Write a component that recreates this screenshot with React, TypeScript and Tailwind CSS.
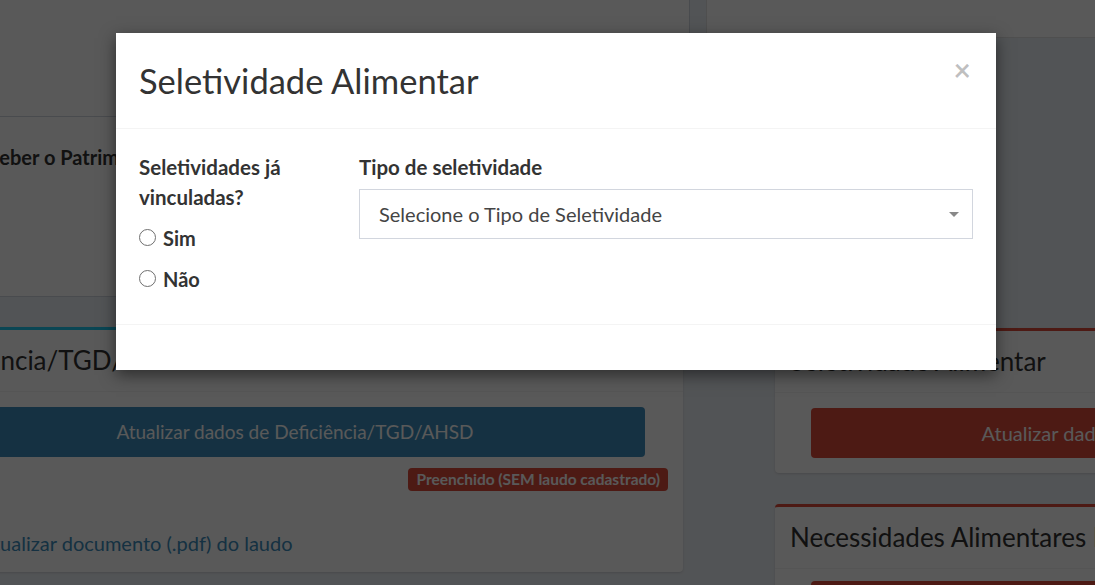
const Radio = ({ label }: { label: string }) => (
  <label className="flex h-[41px] items-center gap-[7px]">
    <span className="h-[17px] w-[17px] rounded-full border border-[#6f6f6f] bg-white" />
    <span className="text-[20px] font-bold text-[#333]">{label}</span>
  </label>
);

const PageBehind = () => (
  <div className="flex">
    <div className="ml-[-95px] w-[785px] shrink-0">
      <div className="h-[297px] border-b border-r border-[#d2d6de] bg-white">
        <div className="h-[117px] border-b border-[#d2d6de]" />
        <div className="pl-[62px] pt-[26px] text-[20px] font-bold leading-[28px] text-[#333]">
          Receber o Patrimônio
        </div>
      </div>
      <div className="mr-[7px] mt-[30px] rounded-sm border-t-[3px] border-[#1ec8ef] bg-white shadow-sm">
        <div className="flex h-[62px] items-center border-b border-[#f4f4f4] px-[15px] text-[26px] text-[#333]">
          Deficiência/TGD/AHSD
        </div>
        <div className="p-[15px]">
          <div className="ml-[25px] mr-[23px] flex h-[50px] items-center justify-center rounded bg-[#3c8dbc] text-[19px] text-white">
            Atualizar dados de Deficiência/TGD/AHSD
          </div>
          <div className="mt-[11px] flex justify-end">
            <span className="flex h-[23px] items-center rounded bg-[#dd4b39] px-[8px] text-[15.5px] font-bold text-white">
              Preenchido (SEM laudo cadastrado)
            </span>
          </div>
          <div className="mt-[38px] pl-[60px] text-[20px] leading-[28px] text-[#3c8dbc]">
            Atualizar documento (.pdf) do laudo
          </div>
        </div>
      </div>
    </div>
    <div className="flex-1">
      <div className="ml-[16px] h-[38px] border-b border-l border-[#e3e3e3] bg-white" />
      <div className="ml-[85px] mt-[290px] w-[800px] rounded-sm border-t-[3px] border-[#dd4b39] bg-white shadow-sm">
        <div className="flex h-[62px] items-center border-b border-[#f4f4f4] px-[15px] text-[26px] text-[#333]">
          Seletividade Alimentar
        </div>
        <div className="py-[15px] pl-[36px]">
          <div className="flex h-[50px] w-[704px] items-center justify-center rounded bg-[#dd4b39] text-[20px] text-white">
            Atualizar dados de Seletividade Alimentar
          </div>
        </div>
      </div>
      <div className="ml-[85px] mt-[31px] w-[800px] rounded-sm border-t-[3px] border-[#dd4b39] bg-white shadow-sm">
        <div className="flex h-[62px] items-center border-b border-[#f4f4f4] px-[15px] text-[26px] text-[#333]">
          Necessidades Alimentares Especiais
        </div>
        <div className="pb-[15px] pl-[36px] pt-[12px]">
          <div className="flex h-[50px] w-[704px] items-center justify-center rounded bg-[#dd4b39] text-[20px] text-white">
            Atualizar dados de Necessidades Alimentares
          </div>
        </div>
      </div>
    </div>
  </div>
);

export default function App() {
  return (
    <div className="relative h-[585px] w-[1095px] overflow-hidden bg-[#ecf0f5] font-['Lato',sans-serif]">
      <PageBehind />
      <div className="absolute inset-0 bg-black/65" />
      <div className="absolute left-[116px] top-[33px] w-[880px] bg-white shadow-[0_5px_15px_rgba(0,0,0,0.5)]">
        <div className="flex h-[96px] items-start justify-between border-b border-[#f4f4f4] px-[23px]">
          <h4 className="self-center pt-[2px] text-[34.5px] leading-none text-[#333]">Seletividade Alimentar</h4>
          <button className="mr-[2px] mt-[21px] text-[30px] font-bold leading-none text-black/25">×</button>
        </div>
        <div className="flex px-[23px] pb-[25px] pt-[23px]">
          <div className="w-[220px] shrink-0">
            <div className="text-[20.5px] font-bold leading-[30px] text-[#333]">
              Seletividades já
              <br />
              vinculadas?
            </div>
            <div className="mt-[5px]">
              <Radio label="Sim" />
              <Radio label="Não" />
            </div>
          </div>
          <div className="flex-1">
            <div className="text-[20.5px] font-bold leading-[30px] text-[#333]">Tipo de seletividade</div>
            <div className="mt-[7px] flex h-[50px] items-center justify-between border border-[#d2d6de] pl-[19px] pr-[13px]">
              <span className="text-[20px] text-[#444]">Selecione o Tipo de Seletividade</span>
              <span className="h-0 w-0 border-x-[5px] border-t-[5px] border-x-transparent border-t-[#888]" />
            </div>
          </div>
        </div>
        <div className="h-[46px] border-t border-[#f4f4f4]" />
      </div>
    </div>
  );
}
